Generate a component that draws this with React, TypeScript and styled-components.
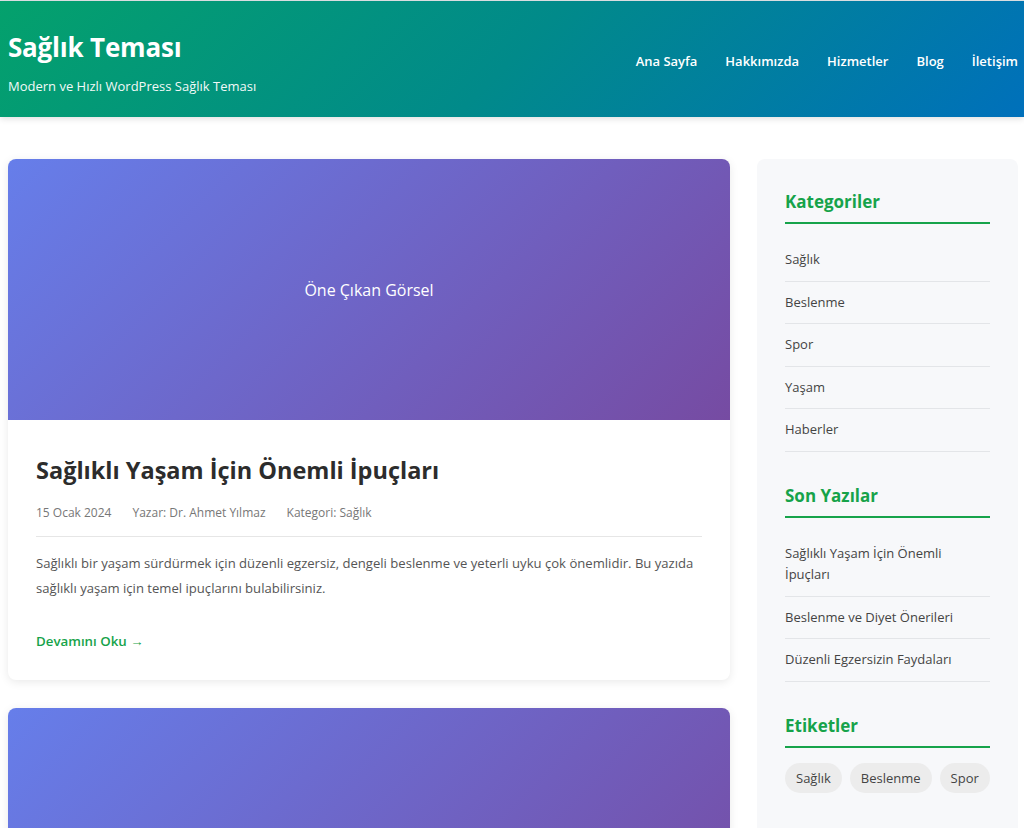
import React from "react";
import styled, { createGlobalStyle } from "styled-components";

const GlobalStyle = createGlobalStyle`
  html, body { margin: 0; padding: 0; background: #fff; }
  body { font-family: "Open Sans", "Noto Sans", sans-serif; color: #333; }
  * { box-sizing: border-box; }
`;

const Page = styled.div`
  border-top: 1px solid #dfe3e6;
`;

const Header = styled.header`
  height: 116px;
  display: flex;
  align-items: center;
  justify-content: space-between;
  padding: 0 6px 0 8px;
  background: linear-gradient(135deg, #04a16c 0%, #018a8a 50%, #0070bb 100%);
  box-shadow: 0 2px 6px rgba(0, 0, 0, 0.12);
  color: #fff;
`;

const Brand = styled.div`
  display: flex;
  flex-direction: column;
  padding-top: 8px;
`;

const SiteTitle = styled.h1`
  margin: 0 0 15px;
  font-size: 26px;
  line-height: 30px;
  font-weight: 700;
  letter-spacing: -0.2px;
`;

const Tagline = styled.p`
  margin: 0;
  font-size: 13px;
  line-height: 18px;
  opacity: 0.95;
`;

const Nav = styled.nav`
  display: flex;
  gap: 28px;
  margin-top: 3px;
`;

const NavLink = styled.a`
  color: #fff;
  text-decoration: none;
  font-size: 13px;
  font-weight: 600;
`;

const Main = styled.main`
  display: grid;
  grid-template-columns: 722px 261px;
  gap: 27px;
  padding: 42px 6px 0 8px;
  align-items: start;
`;

const Posts = styled.div`
  display: flex;
  flex-direction: column;
  gap: 28px;
`;

const Card = styled.article`
  background: #fff;
  border-radius: 8px;
  box-shadow: 0 2px 10px rgba(0, 0, 0, 0.09);
  overflow: hidden;
`;

const Thumb = styled.div`
  height: 261px;
  display: flex;
  align-items: center;
  justify-content: center;
  background: linear-gradient(135deg, #667eea 0%, #764ba2 100%);
  color: #fff;
  font-size: 16px;
`;

const CardBody = styled.div`
  padding: 32px 28px 29px;
`;

const PostTitle = styled.h2`
  margin: 0 0 15px;
  font-size: 23.5px;
  line-height: 36px;
  font-weight: 700;
  color: #2c2c2c;
`;

const Meta = styled.div`
  display: flex;
  gap: 21px;
  font-size: 12px;
  line-height: 20px;
  color: #777;
  padding-bottom: 13px;
  border-bottom: 1px solid #e6e6e6;
`;

const Excerpt = styled.p`
  margin: 14px 0 28px;
  font-size: 13.1px;
  line-height: 25px;
  color: #555;
`;

const ReadMore = styled.a`
  display: inline-block;
  font-size: 13.3px;
  line-height: 20px;
  font-weight: 600;
  color: #16a34a;
  text-decoration: none;
`;

const Sidebar = styled.aside`
  background: #f7f8fa;
  border-radius: 8px;
  padding: 31px 28px 40px;
  min-height: 700px;
`;

const Widget = styled.section`
  & + & {
    margin-top: 32px;
  }
`;

const WidgetTitle = styled.h3`
  margin: 0;
  font-size: 17px;
  line-height: 23px;
  font-weight: 700;
  color: #16a34a;
  padding-bottom: 9px;
  border-bottom: 2px solid #16a34a;
`;

const List = styled.ul`
  list-style: none;
  margin: 15px 0 0;
  padding: 0;
`;

const Item = styled.li`
  padding: 10px 8px 10px 0;
  font-size: 13px;
  line-height: 21.5px;
  color: #444;
  border-bottom: 1px solid #e3e5e8;
`;

const Tags = styled.div`
  display: flex;
  gap: 8px;
  margin-top: 15px;
`;

const Tag = styled.span`
  height: 30px;
  display: inline-flex;
  align-items: center;
  padding: 0 11px;
  border-radius: 15px;
  background: #ececec;
  color: #444;
  font-size: 13px;
`;

export default function App() {
  return (
    <Page>
      <GlobalStyle />
      <Header>
        <Brand>
          <SiteTitle>Sağlık Teması</SiteTitle>
          <Tagline>Modern ve Hızlı WordPress Sağlık Teması</Tagline>
        </Brand>
        <Nav>
          <NavLink href="#">Ana Sayfa</NavLink>
          <NavLink href="#">Hakkımızda</NavLink>
          <NavLink href="#">Hizmetler</NavLink>
          <NavLink href="#">Blog</NavLink>
          <NavLink href="#">İletişim</NavLink>
        </Nav>
      </Header>
      <Main>
        <Posts>
          <Card>
            <Thumb>Öne Çıkan Görsel</Thumb>
            <CardBody>
              <PostTitle>Sağlıklı Yaşam İçin Önemli İpuçları</PostTitle>
              <Meta>
                <span>15 Ocak 2024</span>
                <span>Yazar: Dr. Ahmet Yılmaz</span>
                <span>Kategori: Sağlık</span>
              </Meta>
              <Excerpt>
                Sağlıklı bir yaşam sürdürmek için düzenli egzersiz, dengeli beslenme ve yeterli uyku çok önemlidir. Bu yazıda
                sağlıklı yaşam için temel ipuçlarını bulabilirsiniz.
              </Excerpt>
              <ReadMore href="#">Devamını Oku →</ReadMore>
            </CardBody>
          </Card>
          <Card>
            <Thumb />
          </Card>
        </Posts>
        <Sidebar>
          <Widget>
            <WidgetTitle>Kategoriler</WidgetTitle>
            <List>
              <Item>Sağlık</Item>
              <Item>Beslenme</Item>
              <Item>Spor</Item>
              <Item>Yaşam</Item>
              <Item>Haberler</Item>
            </List>
          </Widget>
          <Widget>
            <WidgetTitle>Son Yazılar</WidgetTitle>
            <List>
              <Item>Sağlıklı Yaşam İçin Önemli İpuçları</Item>
              <Item>Beslenme ve Diyet Önerileri</Item>
              <Item>Düzenli Egzersizin Faydaları</Item>
            </List>
          </Widget>
          <Widget>
            <WidgetTitle>Etiketler</WidgetTitle>
            <Tags>
              <Tag>Sağlık</Tag>
              <Tag>Beslenme</Tag>
              <Tag>Spor</Tag>
            </Tags>
          </Widget>
        </Sidebar>
      </Main>
    </Page>
  );
}
